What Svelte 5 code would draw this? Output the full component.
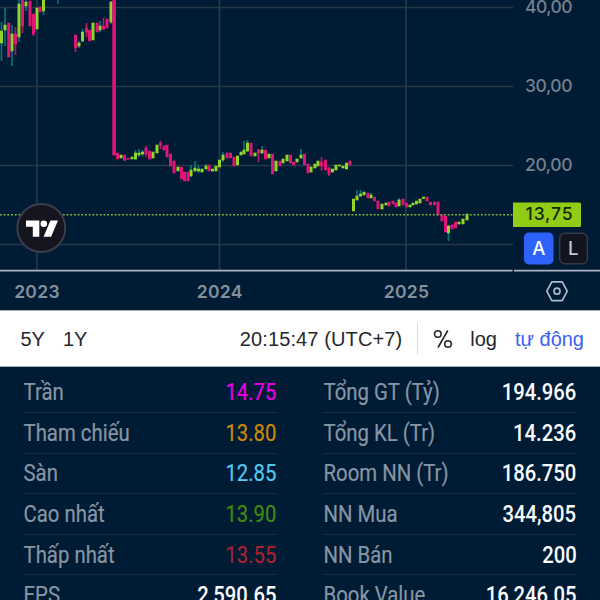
<script>
  // Candles: [x, body top, body bottom, wick top, wick bottom]
  const up = [
    [1.5,31,43,22,61],[5,25,30,8,46],[12,34,51,25,66],[19,4,37,0,42],[26,2,6,0,11],[37,8,29],[43.5,0,11,0,15],
    [79,43,46,41,48],[82.5,32,41,29,42],[93,23,40],[100,26,30,21,32],[111,2,22,1,24],
    [121,155,158],[132,157,159],[135.5,153,159,150,160],[139,153,155,149,157],[142.5,152,154,150,156],[153,152,158],[157,145,153],
    [178,167,171],[191,170,176,165,177],[195,168,171,161,172],[198.5,169,171,165,173],[202,169,172],[206,166,169,164,169],
    [212.5,169,171],[216,166,171],[219.5,160,167],[223,155,160,152,162],[237.5,156,165],[241,152,155],[244,150,154,141,154],[247.5,143,151,140,152],
    [255,153,156],[262,150,153,146,154],[269,154,158],[276,161,171],[283,159,163],[287,155,161],[297,159,162],[301,155,158,149,159],
    [311,167,172],[315,164,168],[318,161,166],[332.5,169,172],[336,165,170],[339.5,165,166],[343,166,168],[346.5,163,169],
    [353.5,199,211],[357,196,200,190,200],[360.5,194,196,190,197],[364,192,195],[371,195,198,193,198],[382,204,209],[386,203,205],
    [399,200,206,198,206],[410,205,207],[413,203,205],[416.5,201,204],[420,199,203],[423.5,197,198.5],
    [448.5,226,233,225,241],[459,222,224],[463,219,224],[467,214,220]
  ];
  const down = [
    [8.7,23,57],[15.5,34,44,27,55],[22.5,0,26,0,33],[30,1,26],[33.5,14,34,14,36],[40,7,12],
    [75.5,35,48,35,52],[86.5,28,32,23,37],[89.5,30,41],[97,23,32],[103.5,26,29,18,30],[107,19,28],
    [117.5,153,159],[124.5,155,160.5],[128,158,159.5],[146,148,154,146,157],[149.5,151,159],[160.5,143,145,141,149],[164,146,150],[167,145,157],
    [170.5,154,166],[174,161,173],[181.5,167,179],[184.5,172,181],[188,172,181],[209,165,171],[227,153,158],
    [230.5,153,158],[234,157,166],[251,143,156],[258.5,150,153,149,162],[265.5,150,159],[272.5,154,174],[280,161,166],[290.5,155,163],[293.5,162,165],
    [304.5,154,165],[308,164,173],[321.5,162,166,157,171],[325.5,160,170],[329,168,174,167,176],[350,161,165],
    [368,193,198],[374.5,197,201],[378,201,209],[389,202,206],[393,201,204],[396,203,207],[403,199,205],[406.5,203,207],
    [427,197,201],[430.5,202,205],[434.5,202,205],[438,202,215],[442,215,221],[445.5,216,232],[452,225,229],[455.5,222,228]
  ];
  const left = [
    ['Trần', '14.75', 'ceil'], ['Tham chiếu', '13.80', 'ref'], ['Sàn', '12.85', 'floor'],
    ['Cao nhất', '13.90', 'high'], ['Thấp nhất', '13.55', 'low'], ['EPS', '2,590.65', '']
  ];
  const right = [
    ['Tổng GT (Tỷ)', '194.966', ''], ['Tổng KL (Tr)', '14.236', ''], ['Room NN (Tr)', '186.750', ''],
    ['NN Mua', '344,805', ''], ['NN Bán', '200', ''], ['Book Value', '16,246.05', '']
  ];
</script>

{#snippet candles(list, cls)}
  <g class={cls}>
    {#each list as [x, t, b, wt, wb]}
      {#if wt !== undefined}<rect class="wick" x={x - 0.8} y={wt} width="1.6" height={wb - wt} />{/if}
      <rect x={x - 1.5} y={t - 0.3} width="3" height={b - t + 0.6} />
    {/each}
  </g>
{/snippet}

{#snippet column(rows)}
  <div class="column">
    {#each rows as [label, value, tone]}
      <div class="row"><span class="label">{label}</span><span class="value {tone}">{value}</span></div>
    {/each}
  </div>
{/snippet}

<div class="screen">
  <svg class="chart" width="600" height="310" viewBox="0 0 600 310">
    <path class="grid" d="M37 0V270M219.5 0V270M406 0V270M0 7.5H513M0 86.5H513M0 165.5H513M0 244.5H513" />
    {@render candles(up, 'up')}
    {@render candles(down, 'down')}
    <rect class="wick58" x="57.2" y="0" width="1.5" height="4" />
    <rect class="drop" x="112.3" y="0" width="3.6" height="155.5" />
    <path class="current" d="M0 214.8H513" />
    <g class="prices">
      <text x="525" y="12.7" textLength="47.5">40,00</text>
      <text x="525" y="91.7" textLength="47.5">30,00</text>
      <text x="525" y="170.7" textLength="47.5">20,00</text>
    </g>
    <path class="tag" d="M513 202.5h66.500q1.500 0 1.500 1.500v21.500q0 1.500-1.500 1.500H513z" />
    <text class="tagtext" x="525.500" y="220" textLength="47">13,75</text>
    <rect x="524" y="232.500" width="29.500" height="32" rx="5" fill="#2d62fb" />
    <rect x="559.700" y="233.200" width="27.600" height="30.600" rx="5" fill="#12141f" stroke="#363a45" stroke-width="1.500" />
    <text class="mode" x="538.700" y="255.300">A</text>
    <text class="mode dim" x="573.300" y="255.300">L</text>
    <path d="M0 270.700H512.500M514 270.700H600" stroke="#abb4c7" stroke-width="1.800" />
    <g class="years">
      <text x="37" y="298">2023</text><text x="219.700" y="298">2024</text><text x="406.500" y="298">2025</text>
    </g>
    <path class="hex" d="M551.800 281.800h10.400l5 9.400-5 9.400h-10.400l-5-9.400z" />
    <circle class="hex" cx="557" cy="291.200" r="3" />
    <circle cx="41.300" cy="228" r="24" fill="#14151f" stroke="#3b3e4a" stroke-width="2" />
    <path fill="#fff" d="M26 220.500h13.300v16.300h-6.500v-10H26zM50.400 220.500H58l-6.900 16.300h-7.500z" />
    <circle cx="43.800" cy="223.800" r="3.300" fill="#fff" />
  </svg>

  <div class="toolbar">
    <span class="five">5Y</span><span>1Y</span>
    <span class="clock">20:15:47 (UTC+7)</span>
    <i class="divider"></i>
    <svg class="percent" width="20" height="20" viewBox="0 0 20 20"><circle cx="4.800" cy="5" r="3.300" /><circle cx="15" cy="15" r="3.300" /><path d="M14.800 1.500 5 18.500" /></svg>
    <span class="log">log</span>
    <span class="auto">tự động</span>
  </div>

  <div class="stats">
    {@render column(left)}
    {@render column(right)}
  </div>
</div>

<style>
  :global(body) { margin: 0; background: #001b34; }
  .screen { width: 600px; height: 600px; overflow: hidden; background: #001b34; font-family: 'Liberation Sans', Arial, sans-serif; }
  .chart { display: block; }
  .grid { stroke: #253947; stroke-width: 1.7; fill: none; }
  .up { fill: #94d52b; }
  .down, .drop { fill: #df1578; }
  .up .wick, .wick58 { fill: #087779; }
  .down .wick { fill: #b51e65; }
  .current { stroke: #86b83c; stroke-width: 1.6; stroke-dasharray: 1.8 1.9; }
  text { font-family: Inter, sans-serif; }
  .prices text { font-size: 17.5px; font-weight: 500; fill: #74808e; }
  .tag { fill: #92cd16; }
  .tagtext { font-size: 17.5px; font-weight: 500; fill: #142708; }
  .mode { font-size: 18.5px; font-weight: 500; fill: #fff; text-anchor: middle; }
  .dim { fill: #c5c7ce; }
  .years text { font-size: 17.5px; font-weight: 600; fill: #84909d; text-anchor: middle; letter-spacing: 0.3px; }
  .hex { fill: none; stroke: #afb9c8; stroke-width: 1.7; stroke-linejoin: round; }

  .toolbar { box-sizing: border-box; height: 57px; display: flex; align-items: center; padding: 0 16px 0 20.5px; background: #fff; border-top: 1px solid #a2adb8; border-bottom: 1px solid #a2adb8; font-size: 20px; color: #25272c; white-space: nowrap; }
  .toolbar span { position: relative; top: 0.5px; }
  .five { margin-right: 18px; }
  .clock { margin-left: auto; letter-spacing: 0.12px; }
  .divider { width: 1px; height: 32px; background: #d9dce2; margin: 0 15px 0 15px; }
  .percent { fill: none; stroke: #25272c; stroke-width: 1.6; margin-right: 17px; }
  .log { margin-right: 18px; }
  .auto { color: #3d60ef; }

  .stats { display: flex; gap: 46px; padding: 5.5px 23px 0; font-family: Roboto, sans-serif; font-size: 23px; }
  .column { width: 254px; }
  .row { box-sizing: border-box; height: 40.6px; display: flex; justify-content: space-between; align-items: center; border-bottom: 1px solid #142c43; line-height: 40px; white-space: nowrap; }
  .label { color: #8795a4; transform: translate(0.5px, 1px) scaleX(0.885); transform-origin: left; -webkit-text-stroke: 0.2px; }
  .value { color: #fafcff; font-weight: 500; transform: translate(-0.5px, 1px) scaleX(0.88); transform-origin: right; }
  .ceil, .ref, .floor, .high, .low { font-weight: 400; -webkit-text-stroke: 0.2px; }
  .ceil { color: #ea00e9; }
  .ref { color: #c98a08; }
  .floor { color: #55c8ef; }
  .high { color: #408a12; }
  .low { color: #a82332; }
</style>
